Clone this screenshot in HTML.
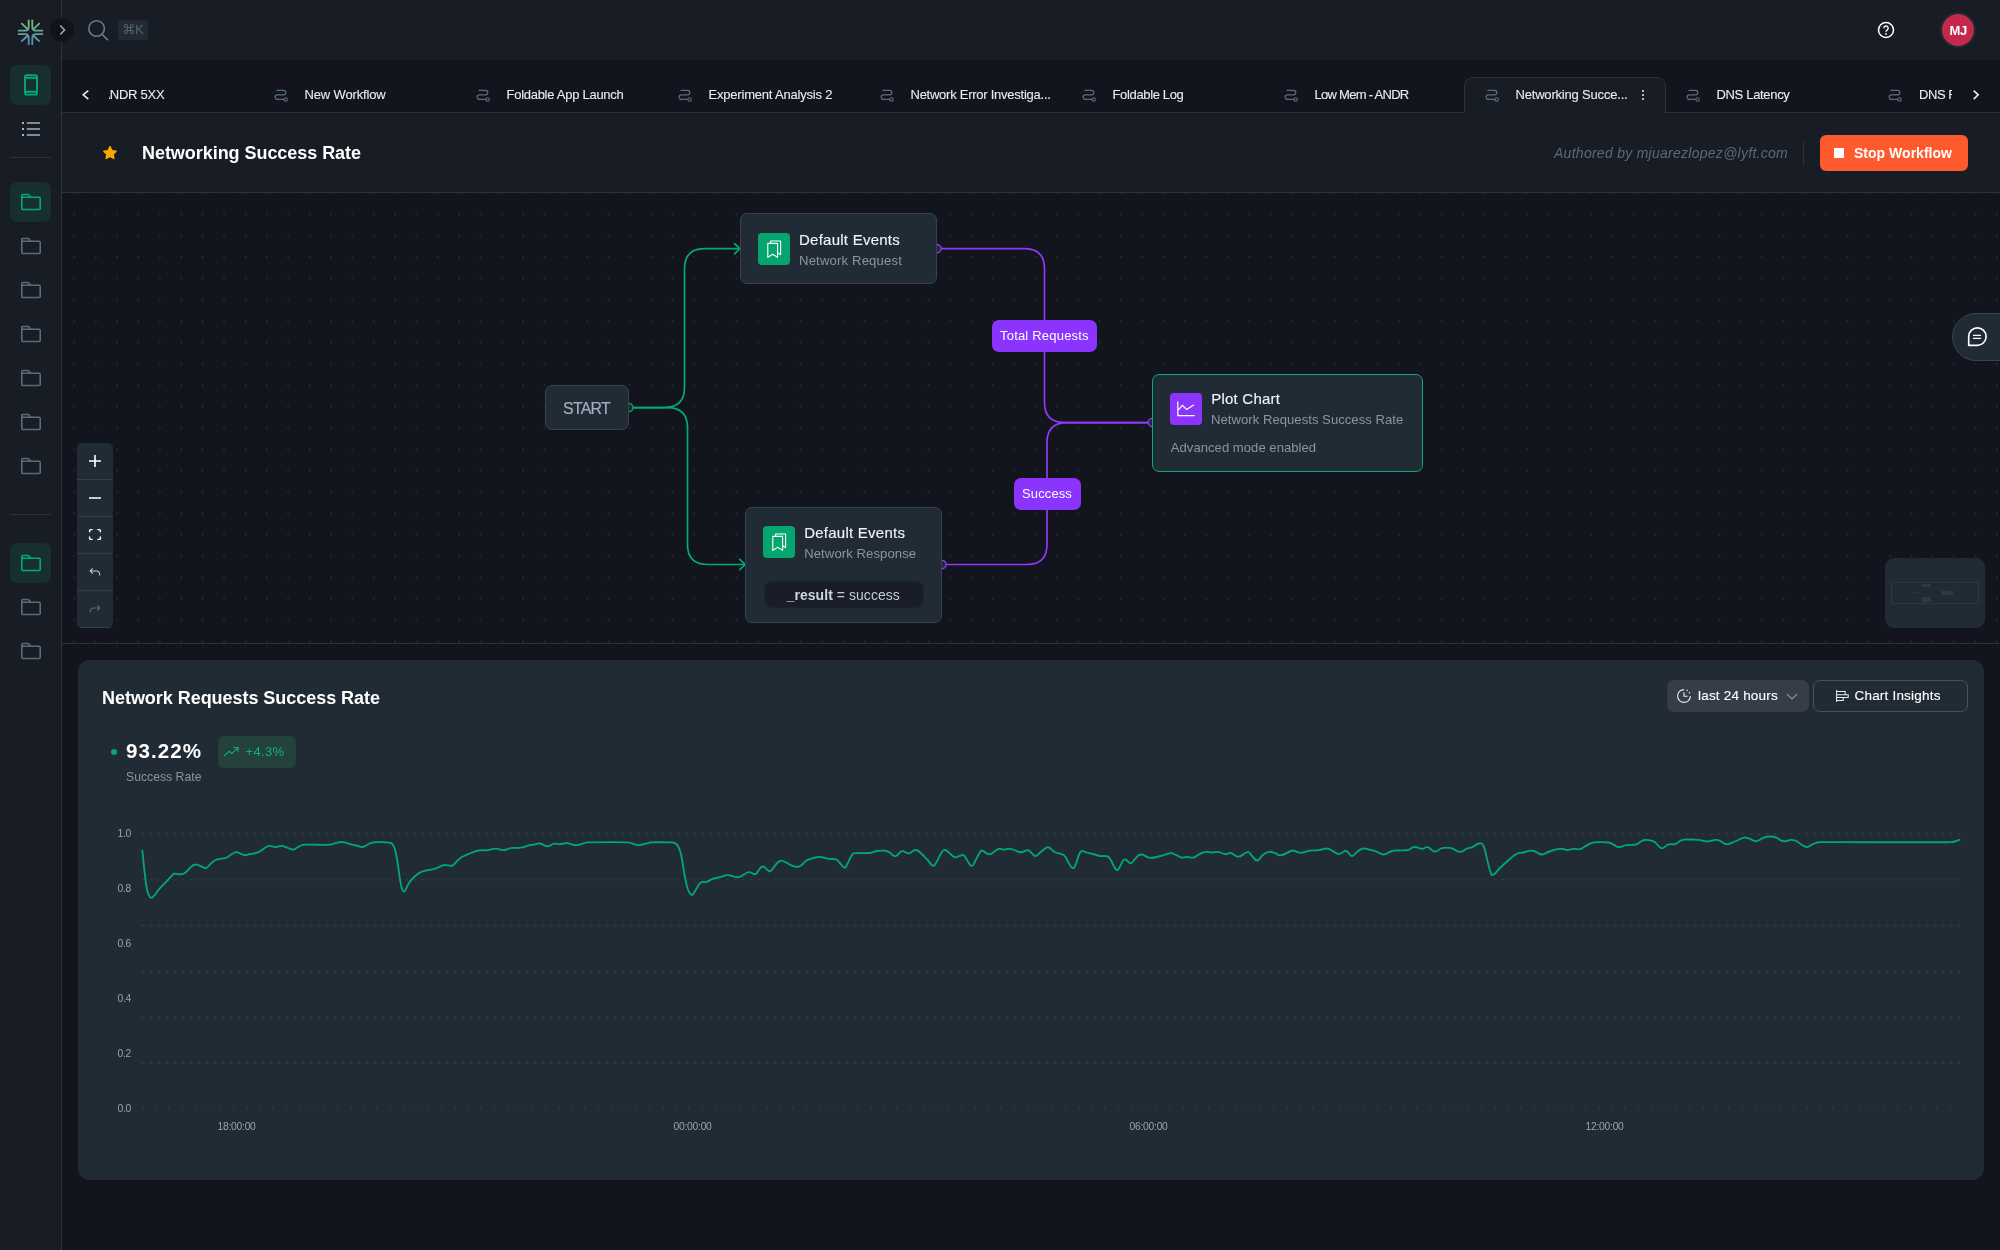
<!DOCTYPE html>
<html lang="en">
<head>
<meta charset="utf-8">
<title>Networking Success Rate</title>
<style>
*{box-sizing:border-box;margin:0;padding:0}
html,body{width:2000px;height:1250px;overflow:hidden;background:#12151d}
body{font-family:"Liberation Sans",sans-serif;color:#eceff3;position:relative}
#root{position:absolute;left:0;top:0;width:2000px;height:1250px;will-change:transform}
.abs{position:absolute}
.t{position:absolute;white-space:nowrap;line-height:1}
#sidebar{position:absolute;left:0;top:0;width:62px;height:1250px;background:#181c25;border-right:1px solid #2b323d}
#topbar{position:absolute;left:62px;top:0;width:1938px;height:60px;background:#181c25}
#tabbar{position:absolute;left:62px;top:60px;width:1938px;height:53px;background:#12151d;border-bottom:1px solid #2b323d}
#header{position:absolute;left:62px;top:113px;width:1938px;height:80px;background:#181c25;border-bottom:1px solid #2b323d}
#canvas{position:absolute;left:62px;top:193px;width:1938px;height:451px;background-color:#12151d;border-bottom:1px solid #2b323d;overflow:hidden}
#panel{position:absolute;left:78px;top:660px;width:1906px;height:520px;background:#212b35;border-radius:12px}
svg{position:absolute;overflow:visible}
.sbtn{position:absolute;left:10px;width:41px;height:40px;border-radius:7px;background:#17302f}
.tabtxt{font-size:13px;color:#e9ecf0;top:88px;-webkit-text-stroke:0.1px #e9ecf0}
.node{position:absolute;background:#212b35;border:1px solid #38424e;border-radius:7px}
.ico{width:32px;height:32px;border-radius:4px}
.bm{fill:none;stroke:#fff;stroke-width:1.1;stroke-linejoin:round}
.n1{font-size:15px;color:#f0f2f5;-webkit-text-stroke:0.15px #f0f2f5}
.n2{font-size:13.1px;color:#8a95a1}
.pl{font-size:13px;color:#fff}
.ax{font-size:10.3px;color:#99a2ad;letter-spacing:-0.25px}
.fo{color:#5e6a77}
.wf{color:#5a6e7f}
.pill{position:absolute;background:#8b34fd;border-radius:7px;color:#fff}
</style>
</head>
<body>
<div id="root">
<!-- SIDEBAR -->
<div id="sidebar"></div>
<svg width="0" height="0" style="left:0;top:0">
<defs>
<linearGradient id="lg" gradientUnits="userSpaceOnUse" x1="0" y1="-12.6" x2="0" y2="12.6"><stop offset="0" stop-color="#7ec46a"/><stop offset="0.5" stop-color="#68a396"/><stop offset="1" stop-color="#588bc0"/></linearGradient>
<symbol id="folder" viewBox="0 0 24 20" overflow="visible"><path d="M1.8 16.5V3.5a1 1 0 0 1 1-1H8.2L11 5.3H19.2a1 1 0 0 1 1 1V16.5a1 1 0 0 1-1 1H2.8a1 1 0 0 1-1-1zM1.8 5.3H11" fill="none" stroke="currentColor" stroke-width="1.6" stroke-linejoin="round"/></symbol>
<symbol id="wf" viewBox="0 0 16 14" overflow="visible"><path d="M3 2.4H9.6a2.2 2.2 0 0 1 0 4.4H3.4a2.3 2.3 0 0 0 0 4.6H9.8" fill="none" stroke="currentColor" stroke-width="1.2" stroke-linecap="round"/><circle cx="11.6" cy="11.4" r="1.7" fill="none" stroke="currentColor" stroke-width="1.1"/></symbol>
</defs>
</svg>
<!-- logo -->
<svg width="62" height="62" viewBox="0 0 62 62" style="left:0;top:0" fill="none" stroke="url(#lg)" stroke-width="1.8">
<g transform="translate(30.5 32.4)">
<path d="M-1.8 -12.6V-5.4Q-1.8 -1.8 -5.4 -1.8H-12.6M-9.2 -9.2L-3.2 -3.6"/>
<path d="M1.8 -12.6V-5.4Q1.8 -1.8 5.4 -1.8H12.6M9.2 -9.2L3.2 -3.6"/>
<path d="M-1.8 12.6V5.4Q-1.8 1.8 -5.4 1.8H-12.6M-9.2 9.2L-3.2 3.6"/>
<path d="M1.8 12.6V5.4Q1.8 1.8 5.4 1.8H12.6M9.2 9.2L3.2 3.6"/>
</g>
</svg>
<div class="sbtn" style="top:65px"></div>
<svg width="62" height="40" viewBox="0 0 62 40" style="left:0;top:65px" fill="none" stroke="#03aa73" stroke-width="1.9"><rect x="25" y="10.2" width="12" height="19.4" rx="1.9"/><path d="M25 12.9H37M25 26.7H37"/></svg>
<svg width="62" height="30" viewBox="0 0 62 30" style="left:0;top:114px"><path d="M22 8h2v2h-2zM22 14h2v2h-2zM22 20h2v2h-2z" fill="#a9b2bd"/><path d="M26.8 8h13.2v2H26.8zM26.8 14h13.2v2H26.8zM26.8 20h13.2v2H26.8z" fill="#7f8a96"/></svg>
<div class="abs" style="left:10px;top:157px;width:41px;height:1px;background:#2b323d"></div>
<div class="sbtn" style="top:182px"></div>
<svg class="fo" style="left:20px;top:192px;color:#03aa73" width="24" height="20"><use href="#folder"/></svg>
<svg class="fo" style="left:20px;top:236px" width="24" height="20"><use href="#folder"/></svg>
<svg class="fo" style="left:20px;top:280px" width="24" height="20"><use href="#folder"/></svg>
<svg class="fo" style="left:20px;top:324px" width="24" height="20"><use href="#folder"/></svg>
<svg class="fo" style="left:20px;top:368px" width="24" height="20"><use href="#folder"/></svg>
<svg class="fo" style="left:20px;top:412px" width="24" height="20"><use href="#folder"/></svg>
<svg class="fo" style="left:20px;top:456px" width="24" height="20"><use href="#folder"/></svg>
<div class="abs" style="left:10px;top:514px;width:41px;height:1px;background:#2b323d"></div>
<div class="sbtn" style="top:543px"></div>
<svg class="fo" style="left:20px;top:553px;color:#03aa73" width="24" height="20"><use href="#folder"/></svg>
<svg class="fo" style="left:20px;top:597px" width="24" height="20"><use href="#folder"/></svg>
<svg class="fo" style="left:20px;top:641px" width="24" height="20"><use href="#folder"/></svg>
<!-- TOPBAR -->
<div id="topbar"></div>
<div class="abs" style="left:50px;top:18px;width:24px;height:24px;border-radius:12px;background:#11131b"></div>
<svg width="24" height="24" viewBox="0 0 24 24" style="left:50px;top:18px" fill="none" stroke="#a2aabb" stroke-width="1.5"><path d="M10.3 7.6L14.6 12L10.3 16.6"/></svg>
<svg width="30" height="30" viewBox="0 0 30 30" style="left:82px;top:15px" fill="none" stroke="#697c8c" stroke-width="1.6"><circle cx="14.6" cy="13.5" r="7.8"/><path d="M20 19.2L25.4 24.6" stroke-linecap="round"/></svg>
<div class="abs" style="left:118px;top:20px;width:30px;height:20px;border-radius:2px;background:#222a35"></div>
<div class="t" style="left:121.9px;top:23px;font-size:13.2px;color:#526070;font-family:'Liberation Sans','DejaVu Sans',sans-serif">⌘K</div>
<svg width="20" height="20" viewBox="0 0 20 20" style="left:1876px;top:20px" fill="none" stroke="#fff" stroke-width="1.5"><circle cx="10" cy="10" r="7.5"/><path d="M7.8 8.2a2.2 2.2 0 1 1 3.3 1.9c-.7.4-1.1.8-1.1 1.7" stroke-width="1.4"/><circle cx="10" cy="13.9" r="0.9" fill="#fff" stroke="none"/></svg>
<div class="abs" style="left:1940px;top:12px;width:36px;height:36px;border-radius:18px;background:#1b2932"></div>
<div class="abs" style="left:1942px;top:14px;width:32px;height:32px;border-radius:16px;background:#c4284b"></div>
<div class="t" style="left:1949.5px;top:23.8px;font-size:13px;font-weight:700;color:#fff;letter-spacing:-0.3px">MJ</div>
<!-- TABBAR -->
<div id="tabbar"></div>
<div class="abs" style="left:1464px;top:77px;width:202px;height:37px;background:#181c25;border:1px solid #2b323d;border-bottom:none;border-radius:9px 9px 0 0"></div>
<svg width="12" height="14" viewBox="0 0 12 14" style="left:80px;top:88px" fill="none" stroke="#e9ecf0" stroke-width="1.6"><path d="M8.3 2.6L3.2 6.85L8.3 11.1"/></svg>
<svg width="12" height="14" viewBox="0 0 12 14" style="left:1970px;top:88px" fill="none" stroke="#e9ecf0" stroke-width="1.6"><path d="M3.7 2.6L8.2 6.85L3.7 11.1"/></svg>
<div class="abs" style="left:109px;top:80px;width:120px;height:30px;overflow:hidden"><div class="t tabtxt" style="left:-7.6px;top:8px;letter-spacing:-0.25px">ANDR 5XX</div></div>
<div class="abs" style="left:1900px;top:80px;width:52px;height:30px;overflow:hidden"><div class="t tabtxt" style="left:19px;top:8px;letter-spacing:-0.45px">DNS Failures</div></div>
<svg class="wf" style="left:1888px;top:88px" width="16" height="14"><use href="#wf"/></svg>
<svg class="wf" style="left:274px;top:88px" width="16" height="14"><use href="#wf"/></svg>
<div class="t tabtxt" style="left:304.5px;letter-spacing:-0.154px">New Workflow</div>
<svg class="wf" style="left:476px;top:88px" width="16" height="14"><use href="#wf"/></svg>
<div class="t tabtxt" style="left:506.5px;letter-spacing:-0.271px">Foldable App Launch</div>
<svg class="wf" style="left:678px;top:88px" width="16" height="14"><use href="#wf"/></svg>
<div class="t tabtxt" style="left:708.5px;letter-spacing:-0.2px">Experiment Analysis 2</div>
<svg class="wf" style="left:880px;top:88px" width="16" height="14"><use href="#wf"/></svg>
<div class="t tabtxt" style="left:910.5px;letter-spacing:-0.252px">Network Error Investiga...</div>
<svg class="wf" style="left:1082px;top:88px" width="16" height="14"><use href="#wf"/></svg>
<div class="t tabtxt" style="left:1112.5px;letter-spacing:-0.348px">Foldable Log</div>
<svg class="wf" style="left:1284px;top:88px" width="16" height="14"><use href="#wf"/></svg>
<div class="t tabtxt" style="left:1314.5px;letter-spacing:-0.717px">Low Mem - ANDR</div>
<svg class="wf" style="left:1485px;top:88px" width="16" height="14"><use href="#wf"/></svg>
<div class="t tabtxt" style="left:1515.5px;letter-spacing:-0.19px">Networking Succe...</div>
<svg class="wf" style="left:1686px;top:88px" width="16" height="14"><use href="#wf"/></svg>
<div class="t tabtxt" style="left:1716.5px;letter-spacing:-0.327px">DNS Latency</div>
<svg width="6" height="14" viewBox="0 0 6 14" style="left:1640px;top:88px" fill="#e9ecf0"><circle cx="3" cy="3" r="1"/><circle cx="3" cy="7" r="1"/><circle cx="3" cy="11" r="1"/></svg>
<!-- HEADER -->
<div id="header"></div>
<svg width="16" height="16" viewBox="0 0 16 16" style="left:102px;top:145px"><path d="M8 1.6l1.9 4 4.3.6-3.1 3 .8 4.3L8 11.4l-3.9 2.1.8-4.3-3.1-3 4.3-.6z" fill="#ffa800" stroke="#ffa800" stroke-width="1.4" stroke-linejoin="round"/></svg>
<div class="t" style="left:142px;top:143.9px;font-size:18px;font-weight:700;color:#fff;letter-spacing:-0.047px">Networking Success Rate</div>
<div class="t" style="left:1554px;top:146.2px;font-size:14px;font-style:italic;color:#5b6978;letter-spacing:0.27px">Authored by mjuarezlopez@lyft.com</div>
<div class="abs" style="left:1803px;top:141px;width:1px;height:24px;background:#2b323d"></div>
<div class="abs" style="left:1820px;top:135px;width:148px;height:36px;border-radius:6px;background:#ff5a2e"></div>
<div class="abs" style="left:1834px;top:148px;width:10px;height:10px;background:#fff"></div>
<div class="t" style="left:1854px;top:146.2px;font-size:14px;font-weight:700;color:#fff;letter-spacing:0.02px">Stop Workflow</div>
<!-- CANVAS -->
<div id="canvas"></div>
<svg width="2000" height="451" viewBox="0 193 2000 451" style="left:0;top:193px;overflow:hidden">
<defs><pattern id="dots" x="63.82" y="182.32" width="21.36" height="21.36" patternUnits="userSpaceOnUse"><circle cx="10.68" cy="10.68" r="0.8" fill="#313d4a"/></pattern></defs>
<rect x="62" y="193" width="1938" height="450" fill="url(#dots)"/>
<g fill="none" stroke="#03aa73" stroke-width="1.7">
<path d="M629 407.6H664.5Q684.5 407.6 684.5 387.6V268.7Q684.5 248.7 704.5 248.7H739.5"/>
<path d="M629 407.6H667.5Q687.5 407.6 687.5 427.6V544.5Q687.5 564.5 707.5 564.5H745.5"/>
<path d="M734.6 243.6L740 248.7L734.6 253.8M739.8 559.4L745.2 564.5L739.8 569.6" stroke-linecap="round" stroke-linejoin="round"/>
<circle cx="628.8" cy="407.6" r="4.2" fill="#212b35" stroke-width="1.35"/>
</g>
<g fill="none" stroke="#9139f7" stroke-width="1.7">
<path d="M937 248.7H1024.5Q1044.5 248.7 1044.5 268.7V402.6Q1044.5 422.6 1064.5 422.6H1152"/>
<path d="M942 564.5H1027.0Q1047.0 564.5 1047.0 544.5V442.6Q1047.0 422.6 1067.0 422.6H1152"/>
<circle cx="936.9" cy="248.7" r="4.2" fill="#212b35" stroke-width="1.35"/>
<circle cx="941.9" cy="564.5" r="4.2" fill="#212b35" stroke-width="1.35"/>
<circle cx="1152.4" cy="422.6" r="4.2" fill="#212b35" stroke-width="1.35"/>
</g>
</svg>
<!-- nodes -->
<div class="node" style="left:544.5px;top:385px;width:84.5px;height:45px"></div>
<div class="t" style="left:563px;top:400.6px;font-size:15.9px;color:#a3afbb;letter-spacing:-0.72px;-webkit-text-stroke:0.2px #a3afbb">START</div>
<div class="node" style="left:740px;top:213px;width:197px;height:71px"></div>
<div class="abs ico" style="left:758px;top:232.5px;background:#04a56f"></div>
<svg class="bm" style="left:758px;top:232.5px" width="32" height="32" viewBox="0 0 32 32"><path d="M12.6 10.2V8H22.6V21.6L20 20M9.8 10.4H19.6V24.4L14.7 21.2L9.8 24.4z"/></svg>
<div class="t n1" style="left:799px;top:231.6px;letter-spacing:0.246px">Default Events</div>
<div class="t n2" style="left:799px;top:253.6px;letter-spacing:0.17px">Network Request</div>
<div class="node" style="left:745px;top:507px;width:197px;height:115.5px"></div>
<div class="abs ico" style="left:763.3px;top:526.2px;background:#04a56f"></div>
<svg class="bm" style="left:763.3px;top:526.2px" width="32" height="32" viewBox="0 0 32 32"><path d="M12.6 10.2V8H22.6V21.6L20 20M9.8 10.4H19.6V24.4L14.7 21.2L9.8 24.4z"/></svg>
<div class="t n1" style="left:804.2px;top:524.6px;letter-spacing:0.246px">Default Events</div>
<div class="t n2" style="left:804.2px;top:546.8px;letter-spacing:0.09px">Network Response</div>
<div class="abs" style="left:763.7px;top:580.8px;width:160px;height:27.5px;border-radius:8px;background:#181d27;border:1px solid #1c222c"></div>
<div class="t" style="left:786.6px;top:587.6px;font-size:14px;color:#c5ccd4;letter-spacing:0.05px"><b style="color:#d0d6de">_result</b> = success</div>
<div class="node" style="left:1152px;top:374px;width:271px;height:98px;border-color:#0fa871"></div>
<div class="abs ico" style="left:1170.2px;top:393px;background:#8b34fd"></div>
<svg style="left:1170.2px;top:393px" width="32" height="32" viewBox="0 0 32 32" fill="none" stroke="#fff" stroke-width="1.2"><path d="M7.8 8.6V22.6H24.6M8.2 17.2L12.4 12.4L16.6 16.4L24 11.8"/></svg>
<div class="t n1" style="left:1211.2px;top:391px;letter-spacing:0.23px">Plot Chart</div>
<div class="t n2" style="left:1211px;top:413.3px;letter-spacing:0.03px">Network Requests Success Rate</div>
<div class="t n2" style="left:1170.8px;top:441.3px;letter-spacing:0.02px">Advanced mode enabled</div>
<div class="pill" style="left:992px;top:320px;width:105px;height:32px"></div>
<div class="t pl" style="left:1000px;top:328.5px;letter-spacing:0.2px">Total Requests</div>
<div class="pill" style="left:1013.5px;top:478px;width:67.5px;height:32px"></div>
<div class="t pl" style="left:1022px;top:486.5px;letter-spacing:0.12px">Success</div>
<!-- controls -->
<div class="abs" style="left:77px;top:443px;width:36px;height:185px;border-radius:5px;background:#212b35;overflow:hidden">
<div class="abs" style="left:0;top:36px;width:36px;height:1px;background:#343c47"></div>
<div class="abs" style="left:0;top:73px;width:36px;height:1px;background:#343c47"></div>
<div class="abs" style="left:0;top:110px;width:36px;height:1px;background:#343c47"></div>
<div class="abs" style="left:0;top:147px;width:36px;height:1px;background:#343c47"></div>
<div class="abs" style="left:0;top:184px;width:36px;height:1px;background:#343c47"></div>
</div>
<svg width="36" height="185" viewBox="0 0 36 185" style="left:77px;top:443px" fill="none" stroke="#fff" stroke-width="1.6">
<path d="M12 18H24M18 12V24M12 55H24"/>
<path d="M12.6 89.2V87.6a1 1 0 0 1 1-1H15.6M20.4 86.6H22.4a1 1 0 0 1 1 1V89.2M23.4 93.6V95.4a1 1 0 0 1-1 1H20.4M15.6 96.4H13.6a1 1 0 0 1-1-1V93.6" stroke-width="1.4"/>
<path d="M15.6 125.4L13.2 128L15.8 130.6M13.4 128H19.5Q22.8 128 22.8 132.6" stroke="#c5ccd4" stroke-width="1.1"/>
<path d="M20.4 162.4L22.8 165L20.2 167.6M22.6 165H16.5Q13.2 165 13.2 169.6" stroke="#5e6a77" stroke-width="1.1"/>
</svg>
<!-- chat -->
<div class="abs" style="left:1952px;top:313px;width:60px;height:48px;border-radius:24px 0 0 24px;background:#212b35;border:1px solid #3a444f"></div>
<svg width="26" height="26" viewBox="0 0 26 26" style="left:1965px;top:324px" fill="none" stroke="#fff" stroke-width="1.65"><path d="M3.7 21.3V12.6a8.7 8.7 0 1 1 8.7 8.7z" stroke-linejoin="round"/><path d="M8 11.4H16M8 14.3H16" stroke-width="1.3"/></svg>
<!-- minimap -->
<div class="abs" style="left:1885px;top:558px;width:100px;height:70px;border-radius:9px;background:#212b35"></div>
<div class="abs" style="left:1891px;top:582px;width:88px;height:22px;border:1px solid #2d3742"></div>
<div class="abs" style="left:1922px;top:584px;width:8.7px;height:2.9px;background:#2f3944"></div>
<div class="abs" style="left:1913.1px;top:591.7px;width:3.6px;height:1.6px;background:#2f3944"></div>
<div class="abs" style="left:1940.7px;top:591.2px;width:12px;height:3.8px;background:#2f3944"></div>
<div class="abs" style="left:1922.2px;top:597.1px;width:8.7px;height:4.8px;background:#2f3944"></div>
<!-- PANEL -->
<div id="panel"></div>
<div class="t" style="left:102px;top:688.5px;font-size:18px;font-weight:700;color:#fff;letter-spacing:-0.04px">Network Requests Success Rate</div>
<div class="abs" style="left:111px;top:749px;width:6px;height:6px;border-radius:3px;background:#03aa73"></div>
<div class="t" style="left:126px;top:740.5px;font-size:20.6px;font-weight:700;color:#fff;letter-spacing:1.05px">93.22%</div>
<div class="t" style="left:126px;top:771.2px;font-size:12.2px;color:#8a95a1;letter-spacing:0.02px">Success Rate</div>
<div class="abs" style="left:218px;top:736px;width:78px;height:32px;border-radius:6px;background:#25413b"></div>
<svg width="17" height="12" viewBox="0 0 17 12" style="left:223px;top:746px" fill="none" stroke="#10b27a" stroke-width="1.1" stroke-linejoin="round" stroke-linecap="round"><path d="M1.55 9.65L6.3 5.2L8.8 7.6L14.6 1.9M10.9 1.55H14.95V5.6"/></svg>
<div class="t" style="left:245.5px;top:745.3px;font-size:13px;color:#10b27a;letter-spacing:0.36px">+4.3%</div>
<div class="abs" style="left:1667px;top:680px;width:142px;height:32px;border-radius:7px;background:#363c48"></div>
<svg width="16" height="16" viewBox="0 0 16 16" style="left:1676px;top:688px" fill="none" stroke="#e9ecf0" stroke-width="1.1"><path d="M8 1.6A6.4 6.4 0 1 0 14.4 8" /><path d="M8 4.2V8.2H11.6"/><path d="M10.4 2.1A6.4 6.4 0 0 1 13.9 5.6" stroke-dasharray="1.6 1.6"/></svg>
<div class="t" style="left:1698px;top:689.2px;font-size:13.5px;color:#fff;letter-spacing:0.2px;-webkit-text-stroke:0.12px #fff">last 24 hours</div>
<svg width="12" height="8" viewBox="0 0 12 8" style="left:1786px;top:693px" fill="none" stroke="#8a95a1" stroke-width="1.1"><path d="M1 1L6 6L11 1"/></svg>
<div class="abs" style="left:1813px;top:680px;width:155px;height:32px;border-radius:7px;border:1px solid #48505c"></div>
<svg width="16" height="14" viewBox="0 0 16 14" style="left:1835px;top:689px" fill="none" stroke="#e9ecf0" stroke-width="1.05"><path d="M1.6 1V12.9M1.6 2.4H10.2V5.8M1.6 5.8H13.2V8.5H1.6M8.2 8.5V11.5H1.6"/></svg>
<div class="t" style="left:1854.5px;top:689.2px;font-size:13.5px;color:#fff;letter-spacing:0.2px;-webkit-text-stroke:0.12px #fff">Chart Insights</div>
<svg width="2000" height="320" viewBox="0 820 2000 320" style="left:0;top:820px" fill="none">
<g stroke="#3a434f" stroke-width="1" stroke-dasharray="2.8 5.2"><path d="M141.7 834.0H1960"/><path d="M141.7 879.8H1960"/><path d="M141.7 925.6H1960"/><path d="M141.7 971.5H1960"/><path d="M141.7 1017.3H1960"/><path d="M141.7 1063.1H1960"/></g>
<path d="M142 1108.9H1960" stroke="#3a434f" stroke-width="1" stroke-dasharray="2 11"/>
<path d="M142.3 850.0C142.8 854.6 143.2 859.5 144.2 868.7C145.3 877.9 145.4 880.1 146.5 886.7C147.6 893.3 147.6 892.2 148.8 895.0C149.9 897.7 150.0 897.5 151.3 897.7C152.6 897.8 151.8 898.1 154.0 895.7C156.2 893.3 157.0 891.6 160.0 888.2C163.0 884.8 162.8 885.6 166.0 882.2C169.2 878.8 170.5 876.8 172.8 874.7C175.0 872.6 172.9 873.9 175.0 873.8C177.1 873.7 178.4 874.6 181.0 874.2C183.6 873.9 182.9 874.4 185.5 872.5C188.1 870.5 189.1 868.4 191.5 866.5C193.9 864.5 193.4 864.9 195.2 864.7C197.1 864.4 196.6 864.6 199.0 865.4C201.4 866.2 202.8 867.7 205.0 868.0C207.2 868.2 205.9 868.1 208.0 866.5C210.1 864.8 210.6 863.3 213.2 861.5C215.9 859.7 215.3 860.2 218.5 859.2C221.7 858.3 222.6 859.1 226.0 857.8C229.4 856.4 229.4 855.4 232.0 854.0C234.6 852.6 234.4 852.4 236.5 852.2C238.6 852.1 238.2 852.7 240.2 853.4C242.3 854.2 242.3 855.1 244.8 855.2C247.2 855.4 247.2 854.6 250.0 854.0C252.8 853.4 253.4 853.7 256.0 853.0C258.6 852.2 258.1 852.4 260.5 851.0C262.9 849.6 263.5 848.5 265.8 847.2C268.0 846.0 267.1 846.0 269.5 845.9C271.9 845.8 272.5 847.0 275.5 847.0C278.5 847.0 278.9 845.8 281.5 845.9C284.1 846.0 283.2 846.4 286.0 847.2C288.8 848.1 290.1 849.3 292.8 849.5C295.4 849.7 294.4 849.0 296.5 848.0C298.6 847.0 298.8 846.3 301.0 845.5C303.2 844.6 301.4 844.9 305.5 844.7C309.6 844.5 311.5 844.7 317.5 844.7C323.5 844.7 325.0 845.1 329.5 844.7C334.0 844.3 332.5 843.9 335.5 843.2C338.5 842.5 338.9 842.1 341.5 842.0C344.1 841.9 343.4 842.2 346.0 842.9C348.6 843.6 349.4 844.1 352.0 844.7C354.6 845.3 353.9 844.9 356.5 845.5C359.1 846.0 359.9 847.1 362.5 847.0C365.1 846.8 364.8 846.0 367.0 845.0C369.2 844.0 368.9 843.5 371.5 842.8C374.1 842.0 374.1 842.3 377.5 842.2C380.9 842.0 381.8 842.1 385.0 842.3C388.2 842.5 388.2 842.1 390.2 842.9C392.3 843.7 391.9 843.3 393.2 845.5C394.6 847.6 394.4 846.8 395.5 851.5C396.6 856.1 396.6 857.3 397.8 864.2C398.9 871.1 399.0 873.2 400.0 879.2C401.0 885.2 400.9 885.1 401.8 888.2C402.7 891.3 402.7 891.3 403.8 891.5C404.8 891.7 404.7 891.1 406.0 889.0C407.3 886.8 407.1 885.8 409.0 883.0C410.9 880.1 410.9 880.2 413.5 877.7C416.1 875.2 416.4 874.7 419.5 872.9C422.6 871.1 422.5 871.4 426.0 870.5C429.5 869.6 430.1 870.1 433.5 869.2C436.9 868.2 436.7 867.8 439.5 866.8C442.3 865.7 441.9 865.2 444.8 865.0C447.6 864.7 448.5 865.8 450.8 865.7C453.0 865.6 451.5 866.3 453.8 864.5C456.0 862.7 456.6 860.9 459.8 858.5C462.9 856.1 462.9 856.6 466.5 854.9C470.1 853.2 470.6 852.9 474.0 851.8C477.4 850.6 476.6 850.8 480.0 850.4C483.4 850.0 483.6 850.6 487.5 850.1C491.4 849.6 491.8 848.6 495.8 848.6C499.7 848.6 499.5 850.2 503.2 850.1C507.0 850.0 506.4 848.8 510.8 848.2C515.1 847.6 516.2 848.3 520.5 847.7C524.8 847.1 524.6 846.4 528.0 845.6C531.4 844.9 531.0 845.2 534.0 844.7C537.0 844.2 536.6 843.1 540.0 843.5C543.4 843.9 543.9 846.2 547.5 846.2C551.1 846.2 551.1 844.1 554.2 843.7C557.4 843.2 557.1 844.4 560.2 844.2C563.4 844.1 563.1 843.0 567.0 843.2C570.9 843.4 571.3 845.3 576.0 845.2C580.7 845.0 582.0 843.3 585.8 842.6C589.5 841.9 585.8 842.4 591.0 842.3C601.3 842.2 616.9 842.1 627.0 842.3C631.5 842.5 628.5 842.5 631.5 843.2C634.5 843.9 634.7 845.3 639.0 845.2C643.3 845.0 645.0 843.5 648.8 842.8C652.5 842.0 648.9 842.4 654.0 842.3C659.1 842.2 663.8 842.1 669.0 842.3C674.2 842.5 672.6 841.9 675.0 843.2C677.4 844.6 677.1 844.0 678.8 847.7C680.4 851.5 680.2 851.1 681.8 858.2C683.2 865.3 683.2 868.5 684.8 876.2C686.2 883.9 686.1 884.3 687.8 889.0C689.4 893.6 689.8 893.9 691.5 894.7C693.2 895.4 692.6 894.5 694.5 892.0C696.4 889.4 697.1 886.9 699.0 884.5C700.9 882.0 700.1 882.8 702.0 882.2C703.9 881.6 703.9 882.8 706.5 881.9C709.1 881.0 710.5 879.6 712.5 878.8C714.5 877.9 712.7 878.8 714.5 878.5C716.3 878.1 716.6 878.1 719.8 877.2C722.9 876.4 724.1 875.4 727.2 875.2C730.4 874.9 729.7 875.7 732.5 876.2C735.3 876.7 735.7 877.6 738.5 877.2C741.3 876.9 741.1 876.0 743.8 874.7C746.4 873.4 746.2 872.3 749.0 872.2C751.8 872.0 752.6 874.7 755.0 874.2C757.4 873.8 756.9 872.2 758.8 870.2C760.6 868.2 760.6 866.8 762.5 866.5C764.4 866.1 764.4 867.5 766.2 868.7C768.1 869.9 768.1 871.6 770.0 871.2C771.9 870.9 771.7 869.5 773.8 867.2C775.8 864.9 776.2 863.6 778.2 862.0C780.3 860.3 779.9 860.6 782.0 860.8C784.1 860.9 784.1 861.5 786.5 862.7C788.9 863.9 789.1 864.7 791.8 865.7C794.4 866.8 794.8 866.9 797.0 866.9C799.2 866.9 798.5 867.2 800.8 865.7C803.0 864.2 803.6 862.4 806.0 860.8C808.4 859.1 807.1 859.9 810.5 859.0C813.9 858.0 815.0 857.0 819.5 857.0C824.0 857.0 824.4 858.2 828.5 858.8C832.6 859.4 833.4 858.6 836.0 859.4C838.6 860.2 836.9 859.9 839.0 862.0C841.1 864.0 842.2 866.9 844.2 867.5C846.3 868.1 845.4 867.3 847.2 864.2C849.1 861.1 849.7 857.9 851.8 855.2C853.8 852.5 851.8 853.8 855.5 853.2C859.8 852.7 863.6 853.5 869.0 853.0C874.4 852.4 873.5 851.6 877.2 851.0C881.0 850.4 881.0 850.4 884.0 850.7C887.0 851.0 886.4 850.8 889.2 852.2C892.1 853.6 892.1 856.5 895.2 856.2C898.4 856.0 898.6 851.9 902.0 851.2C905.4 850.4 905.4 853.7 908.8 853.4C912.1 853.1 912.3 849.9 915.5 850.0C918.7 850.0 918.5 851.2 921.5 853.7C924.5 856.2 924.6 857.0 927.5 860.0C930.4 863.0 930.8 865.2 933.0 865.7C935.3 866.2 934.3 865.3 936.5 862.0C938.7 858.6 939.6 855.2 941.8 852.2C943.9 849.2 943.4 850.0 945.0 850.0C946.7 850.0 946.1 850.4 948.5 852.2C950.9 854.0 951.9 856.1 954.5 857.2C957.1 858.2 956.8 856.7 959.0 856.2C961.2 855.8 961.4 854.2 963.5 855.2C965.6 856.2 965.2 857.8 967.2 860.5C969.3 863.2 969.7 866.0 971.8 866.0C973.8 866.0 973.4 863.9 975.5 860.5C977.6 857.0 978.1 854.6 980.0 852.2C981.9 849.8 980.6 850.5 983.0 851.0C985.4 851.5 986.0 854.6 989.8 854.2C993.5 853.7 994.5 850.3 998.0 849.2C1001.5 848.1 1000.8 849.8 1003.8 849.7C1006.7 849.5 1006.9 848.6 1009.8 848.8C1012.6 848.9 1012.2 849.5 1015.0 850.4C1017.8 851.3 1017.8 852.2 1021.0 852.2C1024.2 852.2 1025.1 850.1 1027.8 850.2C1030.4 850.4 1029.5 851.5 1031.5 853.0C1033.5 854.4 1033.5 856.1 1035.7 856.0C1038.0 855.8 1037.6 854.3 1040.5 852.2C1043.4 850.1 1044.6 848.2 1047.2 847.4C1049.9 846.7 1048.9 847.9 1051.0 849.2C1053.1 850.5 1052.9 851.3 1055.5 852.5C1058.1 853.7 1059.1 853.1 1061.5 854.2C1063.9 855.2 1063.4 854.4 1065.2 856.7C1067.1 859.0 1067.1 860.6 1069.0 863.5C1070.9 866.3 1071.1 867.8 1072.8 868.0C1074.4 868.1 1074.1 867.8 1075.8 864.2C1077.4 860.6 1077.9 857.0 1079.5 853.7C1081.1 850.4 1080.3 851.4 1082.2 851.2C1084.1 850.9 1084.3 851.9 1087.0 852.7C1089.7 853.4 1089.8 853.2 1093.0 854.0C1096.2 854.8 1096.4 855.4 1099.8 856.0C1103.1 856.5 1103.9 855.5 1106.5 856.2C1109.1 857.0 1108.4 856.4 1110.2 859.0C1112.1 861.5 1112.2 863.6 1114.0 866.5C1115.8 869.3 1115.8 870.2 1117.3 870.2C1118.8 870.2 1118.2 869.2 1120.0 866.5C1121.8 863.8 1121.9 860.2 1124.5 859.4C1127.1 858.6 1127.9 863.3 1130.5 863.2C1133.1 863.0 1132.4 861.1 1135.0 859.0C1137.6 856.8 1137.2 854.8 1141.0 854.5C1144.8 854.2 1145.1 857.4 1150.0 857.8C1154.9 858.1 1155.4 857.1 1160.5 856.0C1165.6 854.8 1166.7 853.6 1170.2 853.2C1173.8 852.9 1171.9 853.4 1174.8 854.5C1177.6 855.5 1178.5 856.8 1181.5 857.5C1184.5 858.1 1183.8 857.0 1186.8 857.0C1189.8 857.0 1190.3 858.2 1193.5 857.5C1196.7 856.7 1196.5 855.6 1199.5 854.2C1202.5 852.7 1202.3 852.2 1205.5 851.8C1208.7 851.3 1209.1 852.5 1212.2 852.5C1215.4 852.5 1215.1 851.5 1218.2 851.9C1221.4 852.3 1221.8 853.9 1225.0 854.2C1228.2 854.4 1227.6 852.3 1231.0 853.0C1234.4 853.6 1234.4 856.9 1238.5 856.7C1242.6 856.5 1244.1 852.4 1247.5 852.2C1250.9 852.0 1249.6 853.9 1252.0 856.0C1254.4 858.0 1254.6 860.6 1257.2 860.5C1259.9 860.3 1259.5 857.4 1262.5 855.2C1265.5 853.0 1266.1 852.2 1269.2 851.8C1272.4 851.3 1272.2 852.4 1275.2 853.2C1278.2 854.1 1277.3 855.8 1281.2 855.2C1285.2 854.6 1287.7 852.0 1291.0 851.0C1294.3 850.0 1291.9 850.6 1294.5 851.0C1297.1 851.4 1297.5 852.7 1301.2 852.7C1305.0 852.6 1305.2 851.3 1309.5 850.7C1313.8 850.1 1314.2 850.8 1318.5 850.2C1322.8 849.7 1323.4 848.3 1326.8 848.5C1330.1 848.6 1329.0 849.3 1332.0 850.7C1335.0 852.1 1335.5 853.9 1338.8 854.0C1342.0 854.1 1342.8 851.3 1345.2 851.0C1347.6 850.7 1346.7 851.7 1348.5 853.0C1350.3 854.2 1350.0 856.3 1352.2 856.0C1354.5 855.6 1354.7 853.3 1357.5 851.5C1360.3 849.6 1360.5 848.9 1363.5 848.5C1366.5 848.0 1366.3 848.9 1369.5 849.7C1372.7 850.4 1372.7 850.2 1376.2 851.5C1379.8 852.7 1379.8 854.6 1383.8 854.5C1387.7 854.3 1388.1 852.0 1392.0 851.0C1395.9 850.0 1395.6 850.7 1399.5 850.4C1403.4 850.1 1404.0 850.8 1407.8 850.0C1411.5 849.1 1410.9 847.2 1414.5 847.0C1418.1 846.7 1418.7 848.8 1422.0 848.9C1425.3 849.0 1424.5 846.6 1427.7 847.2C1430.9 847.9 1431.1 851.2 1434.8 851.5C1438.4 851.7 1438.1 849.0 1442.2 848.2C1446.4 847.3 1446.9 847.2 1451.2 848.2C1455.6 849.1 1455.6 851.8 1459.5 851.9C1463.4 852.0 1463.8 849.6 1467.0 848.5C1470.2 847.3 1469.2 848.5 1472.2 847.2C1475.3 846.0 1476.5 843.8 1479.3 843.5C1482.1 843.2 1481.7 842.9 1483.5 846.2C1485.3 849.5 1484.8 850.5 1486.5 856.7C1488.2 862.9 1488.6 866.5 1490.2 871.0C1491.9 875.5 1490.8 875.5 1493.2 874.7C1495.7 874.0 1496.1 871.7 1500.0 868.0C1503.9 864.2 1504.9 863.2 1509.0 859.7C1513.1 856.2 1512.9 855.8 1516.5 854.0C1520.1 852.2 1519.7 853.3 1523.2 852.5C1526.8 851.7 1527.6 850.9 1530.8 850.7C1533.9 850.5 1533.2 850.8 1536.0 851.8C1538.8 852.7 1538.6 854.5 1542.0 854.5C1545.4 854.4 1545.0 852.9 1549.5 851.5C1554.0 850.0 1555.5 849.1 1560.0 848.8C1564.5 848.4 1564.1 850.0 1567.5 850.0C1570.9 850.0 1570.3 848.9 1573.5 848.8C1576.7 848.6 1577.5 849.7 1580.2 849.2C1583.0 848.7 1581.6 848.2 1584.5 846.7C1587.4 845.1 1588.2 844.0 1592.0 842.9C1595.8 841.8 1595.4 842.3 1599.5 842.2C1603.6 842.0 1604.9 841.8 1608.5 842.5C1612.1 843.1 1611.1 843.6 1613.8 844.7C1616.4 845.8 1615.8 846.8 1619.0 847.0C1622.2 847.1 1622.4 845.7 1626.5 845.2C1630.6 844.6 1631.8 845.7 1635.5 844.7C1639.2 843.7 1638.7 842.5 1641.5 841.2C1644.3 840.0 1643.8 839.7 1646.8 839.8C1649.8 839.8 1650.7 840.1 1653.5 841.4C1656.3 842.8 1655.8 843.5 1658.0 845.2C1660.2 846.8 1659.6 848.3 1662.2 848.2C1664.8 848.0 1665.2 845.5 1668.5 844.4C1671.8 843.4 1671.9 845.0 1675.2 844.0C1678.6 842.9 1678.4 841.3 1682.0 840.2C1685.6 839.1 1685.4 839.5 1689.5 839.5C1693.6 839.4 1694.2 839.4 1698.5 839.9C1702.8 840.4 1702.4 841.4 1706.8 841.4C1711.1 841.4 1712.2 839.8 1715.8 839.8C1719.3 839.8 1718.2 840.3 1721.0 841.4C1723.8 842.5 1723.2 844.4 1727.0 844.2C1730.8 844.1 1731.7 842.6 1736.0 841.0C1740.3 839.3 1740.9 838.2 1744.2 837.7C1747.6 837.1 1746.5 837.8 1749.5 838.7C1752.5 839.6 1752.7 841.5 1756.2 841.2C1759.8 841.0 1760.2 838.9 1763.8 837.7C1767.3 836.5 1767.3 836.5 1770.5 836.5C1773.7 836.5 1773.3 836.5 1776.5 837.7C1779.7 838.9 1779.5 840.7 1783.2 841.2C1787.0 841.8 1788.1 839.8 1791.5 839.8C1794.9 839.8 1794.1 839.9 1796.8 841.2C1799.4 842.6 1799.5 843.6 1802.0 845.0C1804.5 846.4 1804.4 847.0 1806.8 847.0C1809.2 846.9 1809.4 845.8 1811.8 844.7C1814.1 843.7 1813.8 843.4 1816.2 842.8C1818.7 842.1 1816.2 842.3 1821.5 842.2C1837.4 842.1 1848.6 842.2 1880.0 842.2C1911.4 842.2 1929.0 842.3 1947.0 842.2C1952.0 842.1 1949.8 842.2 1952.0 842.0C1954.2 841.7 1954.0 841.7 1956.0 841.1C1958.0 840.5 1959.0 839.9 1960.0 839.5" stroke="#00a870" stroke-width="1.85" stroke-linejoin="round" stroke-linecap="butt"/>
</svg>
<div class="t ax" style="left:117.5px;top:829.0px">1.0</div>
<div class="t ax" style="left:117.5px;top:884.0px">0.8</div>
<div class="t ax" style="left:117.5px;top:939.0px">0.6</div>
<div class="t ax" style="left:117.5px;top:994.0px">0.4</div>
<div class="t ax" style="left:117.5px;top:1049.0px">0.2</div>
<div class="t ax" style="left:117.5px;top:1104.0px">0.0</div>
<div class="t ax" style="left:217.5px;top:1122.1px">18:00:00</div>
<div class="t ax" style="left:673.5px;top:1122.1px">00:00:00</div>
<div class="t ax" style="left:1129.5px;top:1122.1px">06:00:00</div>
<div class="t ax" style="left:1585.5px;top:1122.1px">12:00:00</div>

</div>
</body>
</html>
